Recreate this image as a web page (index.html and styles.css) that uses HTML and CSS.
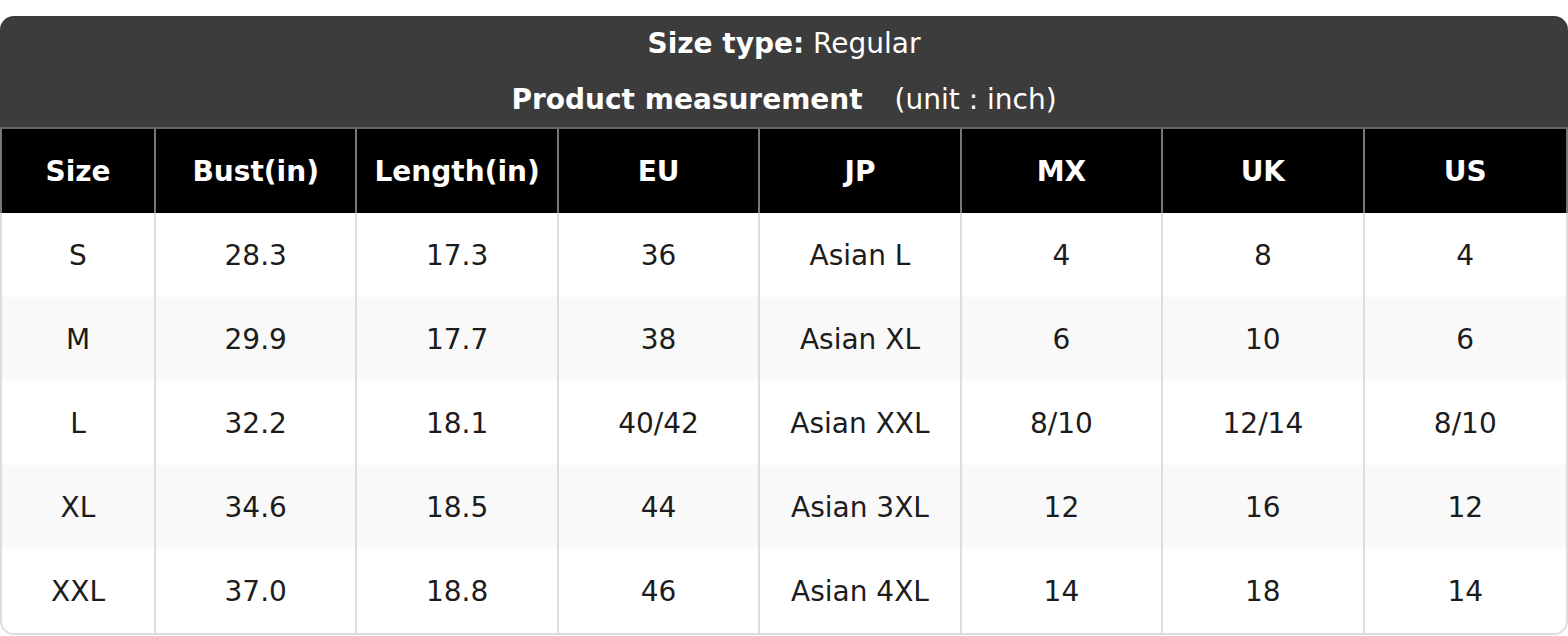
FILE: index.html
```html
<!DOCTYPE html>
<html lang="en">
<head>
<meta charset="utf-8">
<title>Size chart</title>
<link rel="stylesheet" href="styles.css">
</head>
<body>
<div class="chart">
  <div class="title">
    <p class="title-line first"><b>Size type:</b> Regular</p>
    <p class="title-line second"><b>Product measurement</b> <span class="unit">(unit : inch)</span></p>
  </div>
  <div class="grid head">
    <div class="cell">Size</div>
    <div class="cell">Bust(in)</div>
    <div class="cell">Length(in)</div>
    <div class="cell">EU</div>
    <div class="cell">JP</div>
    <div class="cell">MX</div>
    <div class="cell">UK</div>
    <div class="cell">US</div>
  </div>
  <div class="body">
    <div class="grid row">
      <div class="cell">S</div><div class="cell">28.3</div><div class="cell">17.3</div><div class="cell">36</div><div class="cell">Asian L</div><div class="cell">4</div><div class="cell">8</div><div class="cell">4</div>
    </div>
    <div class="grid row alt">
      <div class="cell">M</div><div class="cell">29.9</div><div class="cell">17.7</div><div class="cell">38</div><div class="cell">Asian XL</div><div class="cell">6</div><div class="cell">10</div><div class="cell">6</div>
    </div>
    <div class="grid row">
      <div class="cell">L</div><div class="cell">32.2</div><div class="cell">18.1</div><div class="cell">40/42</div><div class="cell">Asian XXL</div><div class="cell">8/10</div><div class="cell">12/14</div><div class="cell">8/10</div>
    </div>
    <div class="grid row alt">
      <div class="cell">XL</div><div class="cell">34.6</div><div class="cell">18.5</div><div class="cell">44</div><div class="cell">Asian 3XL</div><div class="cell">12</div><div class="cell">16</div><div class="cell">12</div>
    </div>
    <div class="grid row">
      <div class="cell">XXL</div><div class="cell">37.0</div><div class="cell">18.8</div><div class="cell">46</div><div class="cell">Asian 4XL</div><div class="cell">14</div><div class="cell">18</div><div class="cell">14</div>
    </div>
  </div>
</div>
</body>
</html>
```

FILE: styles.css
```css
* { box-sizing: border-box; }
html, body {
  margin: 0;
  padding: 0;
  background: #ffffff;
}
body {
  font-family: "DejaVu Sans", "Liberation Sans", sans-serif;
  font-size: 28px;
  padding-top: 16px;
}
.chart {
  width: 1568px;
  border-radius: 14px 14px 0 0;
  overflow: hidden;
}
.title {
  background: #3c3c3c;
  color: #ffffff;
  border-bottom: 2px solid #666666;
  text-align: center;
}
.title-line {
  margin: 0;
  white-space: nowrap;
}
.title-line.first { height: 55px; line-height: 55px; }
.title-line.second { height: 56px; line-height: 55px; padding-top: 1px; }
.unit { margin-left: 23px; }
.grid {
  display: grid;
  grid-template-columns: 154px repeat(7, 1fr);
}
.cell {
  display: flex;
  align-items: center;
  justify-content: center;
  height: 84px;
  white-space: nowrap;
}
.head {
  background: #000000;
  color: #ffffff;
  font-weight: bold;
  border-left: 2px solid #777777;
  border-right: 2px solid #777777;
}
.head .cell { border-right: 2px solid #777777; }
.head .cell:last-child { border-right: none; }
.body {
  border: 2px solid #dddddd;
  border-top: none;
  border-radius: 0 0 14px 14px;
  overflow: hidden;
  color: #1c1c1c;
}
.row { background: #ffffff; }
.row.alt { background: #f9f9f9; }
.row .cell { border-right: 2px solid #dddddd; }
.row .cell:last-child { border-right: none; }
```
